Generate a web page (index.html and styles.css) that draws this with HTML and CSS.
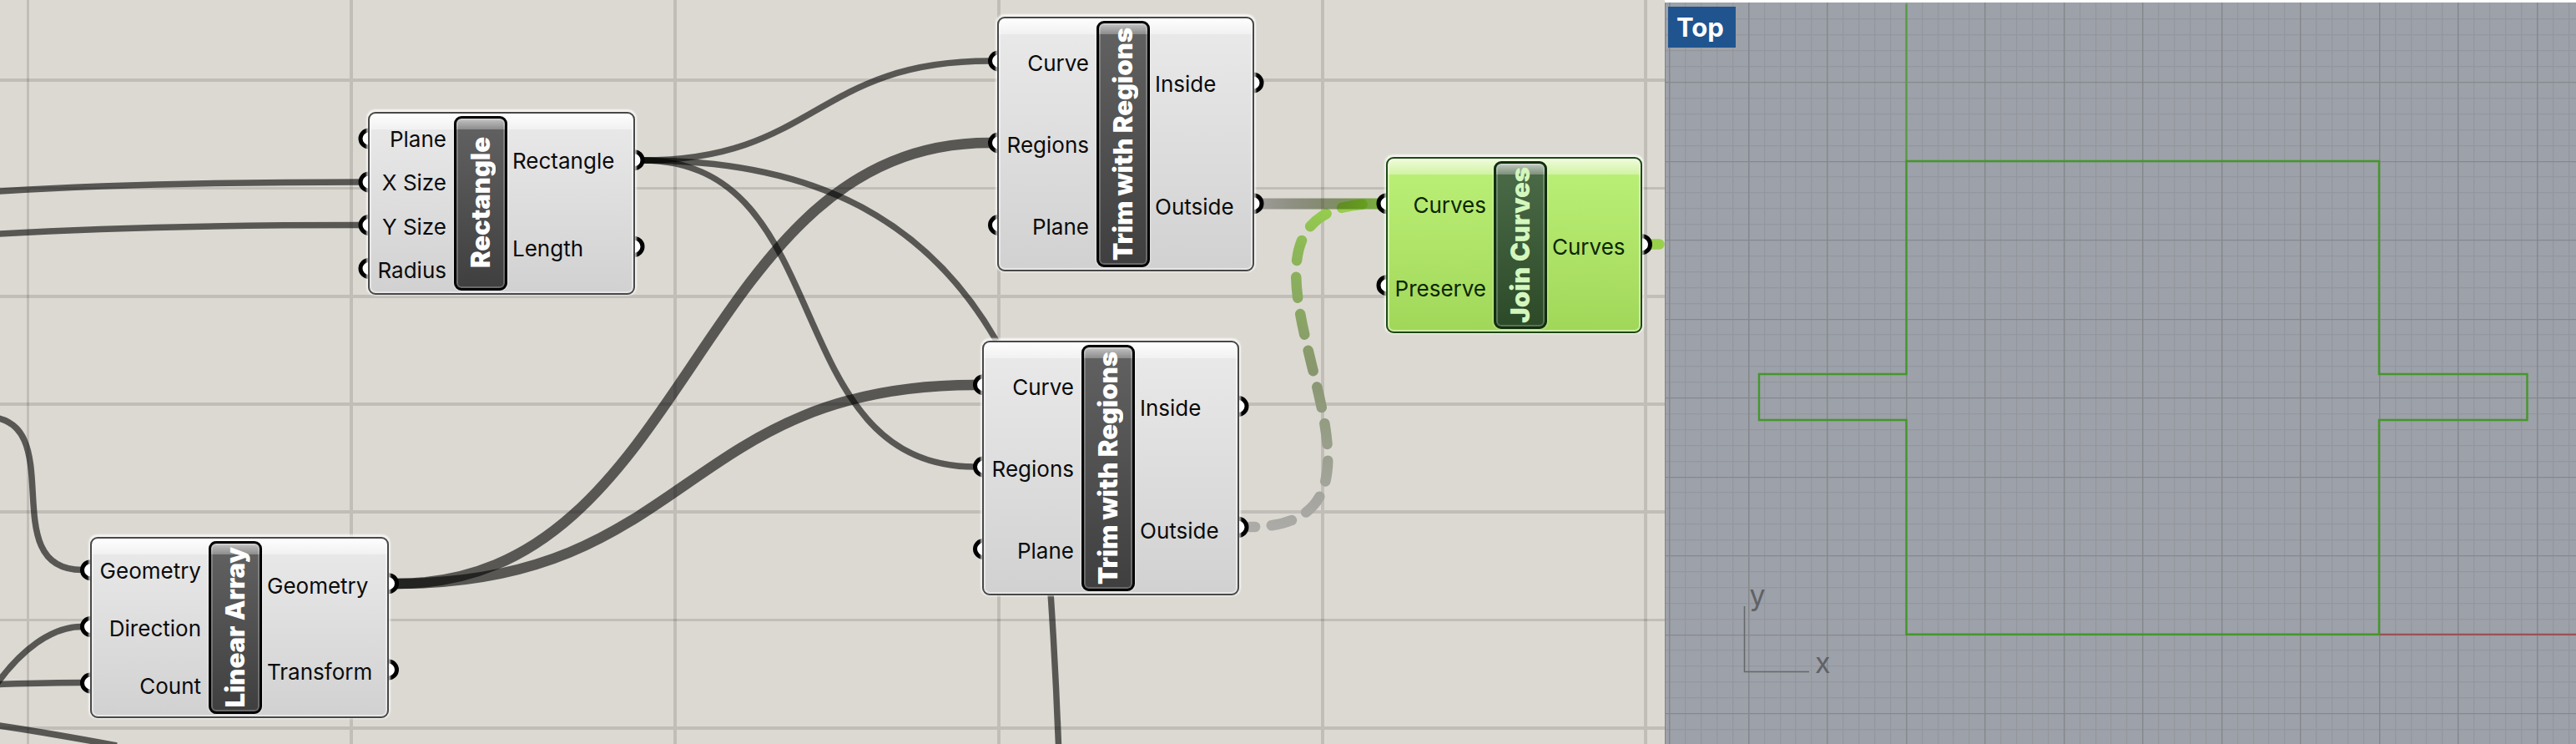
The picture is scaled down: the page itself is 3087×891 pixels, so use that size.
FILE: index.html
```html
<!DOCTYPE html>
<html lang="en">
<head>
<meta charset="utf-8">
<title>Node canvas and Top viewport</title>
<link rel="stylesheet" href="styles.css">
</head>
<body>
<div class="app">
  <main class="canvas">
    <svg class="wires" width="1995" height="891" viewBox="0 0 1995 891">
      <defs>
        <linearGradient id="solidFade" gradientUnits="userSpaceOnUse" x1="1508" y1="0" x2="1652" y2="0">
          <stop offset="0" stop-color="#000" stop-opacity=".28"/>
          <stop offset=".55" stop-color="#2c3d0c" stop-opacity=".5"/>
          <stop offset="1" stop-color="#58a008" stop-opacity=".75"/>
        </linearGradient>
        <linearGradient id="dashFade" gradientUnits="userSpaceOnUse" x1="1497" y1="631" x2="1600" y2="244">
          <stop offset="0" stop-color="#acaba7"/>
          <stop offset=".15" stop-color="#a5a59f"/>
          <stop offset=".5" stop-color="#88966e"/>
          <stop offset=".85" stop-color="#8cb956"/>
          <stop offset="1" stop-color="#98d04c"/>
        </linearGradient>
      </defs>
      <path class="grid" d="M421 0V891M809 0V891M1197 0V891M1585 0V891M1972 0V891M0 96H1995M0 355H1995M0 484H1995M0 613H1995M0 872H1995"/>
      <path class="grid thin" d="M33.5 0V891M0 225.5H1995M0 742.5H1995"/>
      <g class="wire">
        <path d="M-10 229.5C130 221 280 218 432 218"/>
        <path d="M-10 280.5C130 272 280 269.5 432 269.5"/>
        <path d="M-18 499C87 499 -9 682.5 98 682.5"/>
        <path d="M-6 822C25 778 62 750.5 98 750.5"/>
        <path d="M-4 819.5C30 818.5 60 817.5 98 817.5"/>
        <path d="M-4 868.5Q60 878 140 893"/>
        <path d="M770 192C977 192 977 73 1186 73"/>
        <path d="M770 192C1006 192 931 559 1168 559"/>
        <path d="M770 192C950 192 1100 245 1194 408"/>
        <path d="M1259 710Q1265 800 1268.5 893"/>
      </g>
      <g class="wire thick">
        <path d="M476 699C831 699 831 171 1186 171"/>
        <path d="M476 699C824 699 820 461 1168 461"/>
      </g>
      <path d="M1497 631C1743 631 1400 244 1650 244" fill="none" stroke="url(#dashFade)" stroke-width="12.5" stroke-linecap="round" stroke-dasharray="25 19.7" stroke-dashoffset="18"/>
      <rect x="1508" y="237.5" width="144" height="13" fill="url(#solidFade)"/>
      <path d="M1975 292.5H1988.5" fill="none" stroke="#98d04c" stroke-width="12.5" stroke-linecap="round"/>
      <g class="port">
        <circle cx="442" cy="166" r="10"/><circle cx="442" cy="218" r="10"/><circle cx="442" cy="269.5" r="10"/><circle cx="442" cy="321.5" r="10"/>
        <circle cx="760" cy="191.7" r="10"/><circle cx="760" cy="295.3" r="10"/>
        <circle cx="108.5" cy="682.7" r="10"/><circle cx="108.5" cy="750.5" r="10"/><circle cx="108.5" cy="818" r="10"/>
        <circle cx="465.5" cy="698.7" r="10"/><circle cx="465.5" cy="802" r="10"/>
        <circle cx="1196.5" cy="73" r="10"/><circle cx="1196.5" cy="171" r="10"/><circle cx="1196.5" cy="269.5" r="10"/>
        <circle cx="1502" cy="99" r="10"/><circle cx="1502" cy="243.7" r="10"/>
        <circle cx="1178.5" cy="460.7" r="10"/><circle cx="1178.5" cy="559" r="10"/><circle cx="1178.5" cy="657.5" r="10"/>
        <circle cx="1484" cy="486.5" r="10"/><circle cx="1484" cy="631.3" r="10"/>
        <circle cx="1662" cy="243.7" r="10"/><circle cx="1662" cy="341.7" r="10"/>
        <circle cx="1967.5" cy="292.7" r="10"/>
      </g>
    </svg>

    <section class="node node-rectangle">
      <div class="inputs"><span>Plane</span><span>X Size</span><span>Y Size</span><span>Radius</span></div>
      <h2 class="title"><b>Rectangle</b></h2>
      <div class="outputs"><span>Rectangle</span><span>Length</span></div>
    </section>
    <section class="node node-array">
      <div class="inputs"><span>Geometry</span><span>Direction</span><span>Count</span></div>
      <h2 class="title"><b>Linear Array</b></h2>
      <div class="outputs"><span>Geometry</span><span>Transform</span></div>
    </section>
    <section class="node node-trim-a">
      <div class="inputs"><span>Curve</span><span>Regions</span><span>Plane</span></div>
      <h2 class="title"><b>Trim with Regions</b></h2>
      <div class="outputs"><span>Inside</span><span>Outside</span></div>
    </section>
    <section class="node node-trim-b">
      <div class="inputs"><span>Curve</span><span>Regions</span><span>Plane</span></div>
      <h2 class="title"><b>Trim with Regions</b></h2>
      <div class="outputs"><span>Inside</span><span>Outside</span></div>
    </section>
    <section class="node selected node-join">
      <div class="inputs"><span>Curves</span><span>Preserve</span></div>
      <h2 class="title"><b>Join Curves</b></h2>
      <div class="outputs"><span>Curves</span></div>
    </section>
  </main>

  <aside class="viewport">
    <svg class="drawing" width="1092" height="888" viewBox="1995 3 1092 888">
      <g id="minor"></g>
      <g id="major"></g>
      <path class="edge" d="M1995.5 3V891"/>
      <path class="y-axis" d="M2284.5 5V193"/>
      <path class="x-axis" d="M2851 759.8H3087"/>
      <path class="outline" d="M2284.5 193H2851V448H3028.5V503H2851V759.8H2284.5V503H2108V448H2284.5Z"/>
      <path class="gizmo" d="M2090.5 726V804.5H2168"/>
      <text class="axis" x="2096.5" y="724.5">y</text>
      <text class="axis" x="2175" y="806">x</text>
    </svg>
    <div class="view-name">Top</div>
  </aside>
</div>
<script src="grid.js"></script>
</body>
</html>
```

FILE: styles.css
```css
* { box-sizing: border-box; }

body {
  margin: 0;
  overflow: hidden;
  font-family: Inter, "Liberation Sans", sans-serif;
}

.app {
  display: grid;
  grid-template-columns: 1995px 1092px;
  width: 3087px;
  height: 891px;
}

.canvas {
  position: relative;
  overflow: hidden;
  background: #dcd9d2;
}

.wires { display: block; }
.grid { fill: none; stroke: rgba(0, 0, 0, .12); stroke-width: 4; }
.grid.thin { stroke-width: 3; }
.wire { fill: none; stroke: rgba(0, 0, 0, .6); stroke-width: 7.5; }
.wire.thick { stroke-width: 12.5; }
.port { fill: #fff; stroke: #000; stroke-width: 5; }

.node {
  position: absolute;
  display: flex;
  padding: 3px 0;
  border: 2.5px solid #484848;
  border-radius: 9px;
  background:
    linear-gradient(#fefefe, #f1f1f1) 0 0 / 100% 19px no-repeat,
    linear-gradient(#eaeaea, #d1d1d1);
  box-shadow: 0 -1px 2px 1.5px rgba(255, 255, 255, .7), inset 0 0 0 2px rgba(255, 255, 255, .45);
  color: #0b0b0b;
  font-size: 26px;
  line-height: 30px;
}

.node-rectangle { left: 441px; top: 133.5px; width: 320px; height: 219px; }
.node-array { left: 108px; top: 643px; width: 358px; height: 217px; }
.node-trim-a { left: 1195px; top: 20px; width: 307.5px; height: 304.5px; }
.node-trim-b { left: 1177px; top: 408px; width: 307.5px; height: 304.5px; }
.node-join { left: 1661px; top: 188.3px; width: 307px; height: 211px; }

.inputs, .outputs {
  display: flex;
  flex-direction: column;
  white-space: nowrap;
}

.inputs { text-align: right; padding-right: 9px; }
.outputs { flex: 1; padding-left: 6px; }

.node-rectangle .inputs { width: 101px; }
.node-array .inputs { width: 140px; }
.node-trim-a .inputs, .node-trim-b .inputs { width: 117px; }
.node-join .inputs { width: 127px; }

.inputs span, .outputs span {
  flex: 1;
  display: flex;
  align-items: center;
  padding-top: 4px;
}

.inputs span { justify-content: flex-end; }
.node-rectangle span { padding-top: 5px; }
.node-array .inputs span { padding-top: 2px; }

.title {
  display: flex;
  align-items: center;
  justify-content: center;
  width: 64px;
  margin: 0;
  border: 3px solid #000;
  border-radius: 9px;
  background:
    linear-gradient(#c4c4c4, #8c8c8c) 0 0 / 100% 13px no-repeat,
    linear-gradient(#626262, #3f3f3f);
  box-shadow: inset 0 0 0 2px rgba(255, 255, 255, .22), 0 0 2px 1px rgba(255, 255, 255, .4);
  color: #fff;
  font-size: 31px;
  font-weight: 700;
  line-height: 36px;
}

.title b {
  writing-mode: vertical-rl;
  transform: rotate(180deg);
  white-space: nowrap;
}

.selected {
  border-color: #1c4a12;
  background:
    linear-gradient(#effbdc, #d2f3a3) 0 0 / 100% 19px no-repeat,
    linear-gradient(#bcf178, #a1d759);
  color: #0c2604;
}

.selected .title {
  border-color: #10300c;
  background:
    linear-gradient(#c0c9bf, #7c907a) 0 0 / 100% 13px no-repeat,
    linear-gradient(#4c6b49, #2c4a28);
  color: #d3f7bd;
}

.viewport {
  position: relative;
  padding-top: 3px;
  background: #fff;
}

.drawing { display: block; background: #9da1a9; }
.minor { fill: #94979d; }
.major { fill: #85888c; }
.edge { fill: none; stroke: #808388; stroke-width: 1; }
.y-axis { fill: none; stroke: #589c44; stroke-width: 2.4; }
.x-axis { fill: none; stroke: #9d4b4f; stroke-width: 2; }
.outline { fill: none; stroke: #44972b; stroke-width: 2.4; }
.gizmo { fill: none; stroke: #65676a; stroke-width: 1.5; }
.axis { fill: #606265; font-size: 34px; }

.view-name {
  position: absolute;
  left: 4px;
  top: 8px;
  width: 81px;
  height: 49px;
  padding-left: 10px;
  background: #1f548f;
  color: #fff;
  font-size: 31px;
  font-weight: 700;
  line-height: 50px;
}
```

FILE: grid.js
```javascript
const NS = "http://www.w3.org/2000/svg";
const STEP = 94.5 / 5;

function bar(layer, x, y, width, height) {
  const rect = document.createElementNS(NS, "rect");
  rect.setAttribute("class", layer);
  rect.setAttribute("x", x);
  rect.setAttribute("y", y);
  rect.setAttribute("width", width);
  rect.setAttribute("height", height);
  document.getElementById(layer).appendChild(rect);
}

for (let i = 0; i < 58; i++) {
  const layer = i % 5 === 0 ? "major" : "minor";
  bar(layer, Math.round(2001 + i * STEP - 0.8), 3, layer === "major" ? 1.5 : 1.3, 888);
}
for (let i = 1; i < 48; i++) {
  const layer = i % 5 === 0 ? "major" : "minor";
  bar(layer, 1995, Math.round(4 + i * STEP - 0.5), 1092, 1.2);
}
```
